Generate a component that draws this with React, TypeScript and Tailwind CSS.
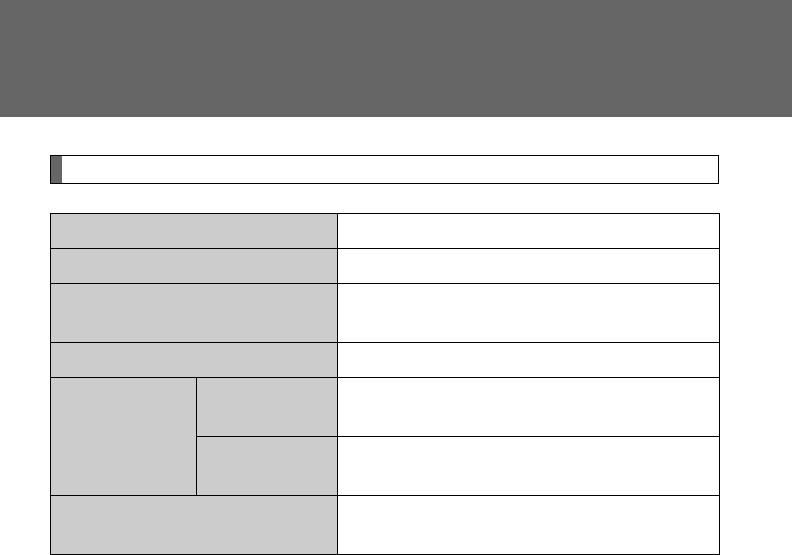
export default function App() {
  const label = "bg-[#cccccc]";
  const value = "bg-white";

  return (
    <div className="w-[792px] h-[555px] bg-white overflow-hidden font-['Liberation_Sans',sans-serif]">
      {/* Top banner */}
      <div className="h-[117px] bg-[#666666]" />

      <div className="pl-[50px] pt-[38px]">
        {/* Section heading bar */}
        <div className="w-[669px] h-[29px] border border-black flex">
          <div className="w-[11px] bg-[#666666]" />
          <div className="flex-1" />
        </div>

        {/* Spec table */}
        <div className="mt-[29px] w-[670px] grid grid-cols-[145px_140px_381px] grid-rows-[34px_34px_58px_34px_58px_58px_58px] gap-px bg-black p-px">
          <div className={`${label} col-span-2`} />
          <div className={value} />

          <div className={`${label} col-span-2`} />
          <div className={value} />

          <div className={`${label} col-span-2`} />
          <div className={value} />

          <div className={`${label} col-span-2`} />
          <div className={value} />

          <div className={`${label} row-span-2`} />
          <div className={label} />
          <div className={value} />
          <div className={label} />
          <div className={value} />

          <div className={`${label} col-span-2`} />
          <div className={value} />
        </div>
      </div>
    </div>
  );
}
